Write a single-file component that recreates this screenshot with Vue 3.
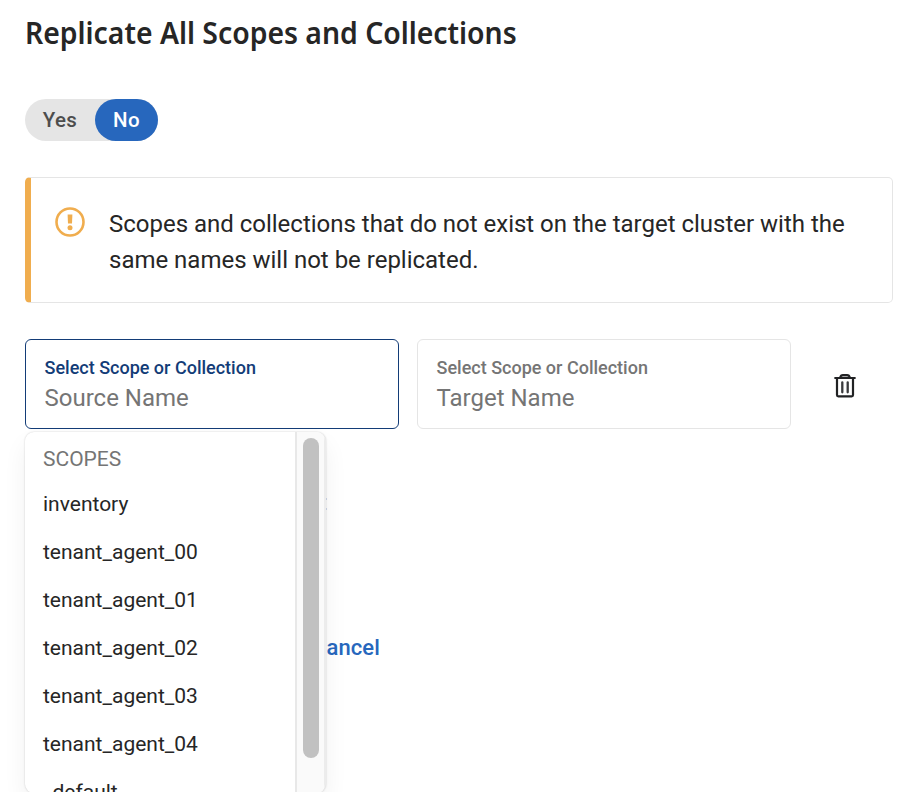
<script setup>
import { ref } from 'vue'

const replicateAll = ref(false)
const scopes = [
  'inventory',
  'tenant_agent_00',
  'tenant_agent_01',
  'tenant_agent_02',
  'tenant_agent_03',
  'tenant_agent_04',
  '_default',
]
</script>

<template>
  <main class="page">
    <h1 class="title"><span>Replicate All Scopes and Collections</span></h1>

    <div class="toggle">
      <button class="option yes" :class="{ active: replicateAll }" @click="replicateAll = true">Yes</button>
      <button class="option no" :class="{ active: !replicateAll }" @click="replicateAll = false">No</button>
    </div>

    <section class="alert">
      <svg class="alert-icon" viewBox="0 0 30 30" width="30" height="30">
        <circle cx="15" cy="15" r="13.5" fill="none" stroke="#f0ad4e" stroke-width="2.6" />
        <path d="M12.600 7.400h4.800l-.4 9.200h-4z" fill="#f0ad4e" />
        <circle cx="15" cy="20.8" r="2.5" fill="#f0ad4e" />
      </svg>
      <p>Scopes and collections that do not exist on the target cluster with the<br />same names will not be replicated.</p>
    </section>

    <div class="fields">
      <div class="field focused">
        <label>Select Scope or Collection</label>
        <span class="placeholder">Source Name</span>
        <div class="menu">
          <div class="list">
            <div class="group">SCOPES</div>
            <div v-for="scope in scopes" :key="scope" class="item">{{ scope }}</div>
          </div>
          <div class="track"><div class="thumb"></div></div>
        </div>
      </div>
      <div class="field">
        <label>Select Scope or Collection</label>
        <span class="placeholder">Target Name</span>
      </div>
      <svg class="trash" viewBox="0 0 22 26" width="22" height="26">
        <path d="M6 5C6.300 2.500 7.600 1.500 9.200 1.500h3.600C14.400 1.500 15.700 2.500 16 5z" fill="#aaa" />
        <path d="M1.200 5h19.600M6.200 4.500C6.600 2.600 7.600 2 9 2h4c1.400 0 2.400.6 2.800 2.500M3 5v17c0 .8.500 1.300 1.300 1.300h13.400c.8 0 1.300-.5 1.300-1.300V5" fill="none" stroke="#212224" stroke-width="2.200" stroke-linecap="round" />
        <path d="M8.300 9.300v10M13.700 9.300v10" fill="none" stroke="#3a3b3d" stroke-width="2.300" stroke-linecap="round" />
      </svg>
    </div>

    <div class="add-row"><span class="edge"></span></div>
    <div class="actions"><a class="cancel">Cancel</a></div>
  </main>
</template>

<style>
body {
  background: #fff;
  overflow: hidden;
}
</style>

<style scoped>
.page {
  box-sizing: border-box;
  width: 912px;
  height: 792px;
  padding: 13px 19px 0 25px;
  overflow: hidden;
  font-family: Roboto, sans-serif;
  color: #262626;
}
.title {
  margin: 0;
  height: 40px;
  font: 600 30px/40px "Noto Sans", sans-serif;
  white-space: nowrap;
}
.title span {
  display: inline-block;
  transform: scaleX(0.945);
  transform-origin: left;
}
.toggle {
  display: flex;
  width: 133px;
  height: 42px;
  margin-top: 46px;
  border-radius: 21px;
  background: #e5e5e5;
}
.option {
  padding: 0;
  border: 0;
  border-radius: 21px;
  background: transparent;
  color: #4d4d4d;
  font: 500 20.500px/42px Roboto, sans-serif;
  letter-spacing: 0.3px;
}
.yes { width: 70px; }
.no { width: 63px; }
.option.active {
  background: #2767bd;
  color: #fff;
}
.alert {
  box-sizing: border-box;
  display: flex;
  height: 126px;
  margin-top: 36px;
  padding: 28px 0 0 24px;
  border: 1px solid #e5e5e5;
  border-left: 6px solid #f0ad4e;
  border-radius: 5px;
}
.alert-icon {
  margin-top: 1px;
}
.alert p {
  margin: 0 0 0 24px;
  font-size: 24px;
  line-height: 36px;
  letter-spacing: -0.01px;
  white-space: nowrap;
}
.fields {
  display: flex;
  gap: 18px;
  margin-top: 36px;
}
.field {
  position: relative;
  box-sizing: border-box;
  width: 374px;
  height: 90px;
  padding: 16px 18px 16px 18.500px;
  border: 1px solid #e5e5e5;
  border-radius: 6px;
  color: #757575;
}
.field label {
  display: block;
  font-size: 18px;
  font-weight: 500;
  line-height: 24px;
}
.field.focused {
  border-color: #133c77;
}
.field.focused label {
  color: #133c77;
}
.placeholder {
  display: block;
  font-size: 24px;
  line-height: 36px;
}
.trash {
  margin: 34px 0 0 25px;
}
.menu {
  position: absolute;
  top: 92px;
  left: -1px;
  z-index: 2;
  box-sizing: border-box;
  display: flex;
  width: 301px;
  height: 361px;
  overflow: hidden;
  border-right: 1px solid #ececec;
  border-radius: 9px;
  background: #fff;
  box-shadow: 0 0 2px rgba(0, 0, 0, 0.2), 0 12px 24px rgba(0, 0, 0, 0.06);
}
.list {
  width: 270px;
  color: #262626;
}
.group {
  padding: 12px 18px 0;
  color: #757575;
  font-size: 21px;
  line-height: 30px;
  height: 36px;
}
.item {
  padding: 0 18px;
  font-size: 21px;
  line-height: 48px;
}
.track {
  box-sizing: border-box;
  width: 30px;
  padding: 6px 0 0 6px;
  border-left: 2px solid #e8e8e8;
  border-right: 1px solid #ececec;
  background: #fafafa;
}
.thumb {
  width: 16px;
  height: 320px;
  border-radius: 8px;
  background: #c1c1c1;
}
.add-row {
  height: 12px;
  padding: 69px 0 0 301px;
}
.edge {
  display: block;
  box-sizing: border-box;
  width: 1px;
  height: 12px;
  border-top: 2px solid #d3ddef;
  border-bottom: 2px solid #d3ddef;
}
.actions {
  padding: 122px 0 0 287px;
}
.cancel {
  color: #2767bd;
  font-size: 22px;
  font-weight: 500;
  line-height: 32px;
  letter-spacing: 0.1px;
}
</style>
